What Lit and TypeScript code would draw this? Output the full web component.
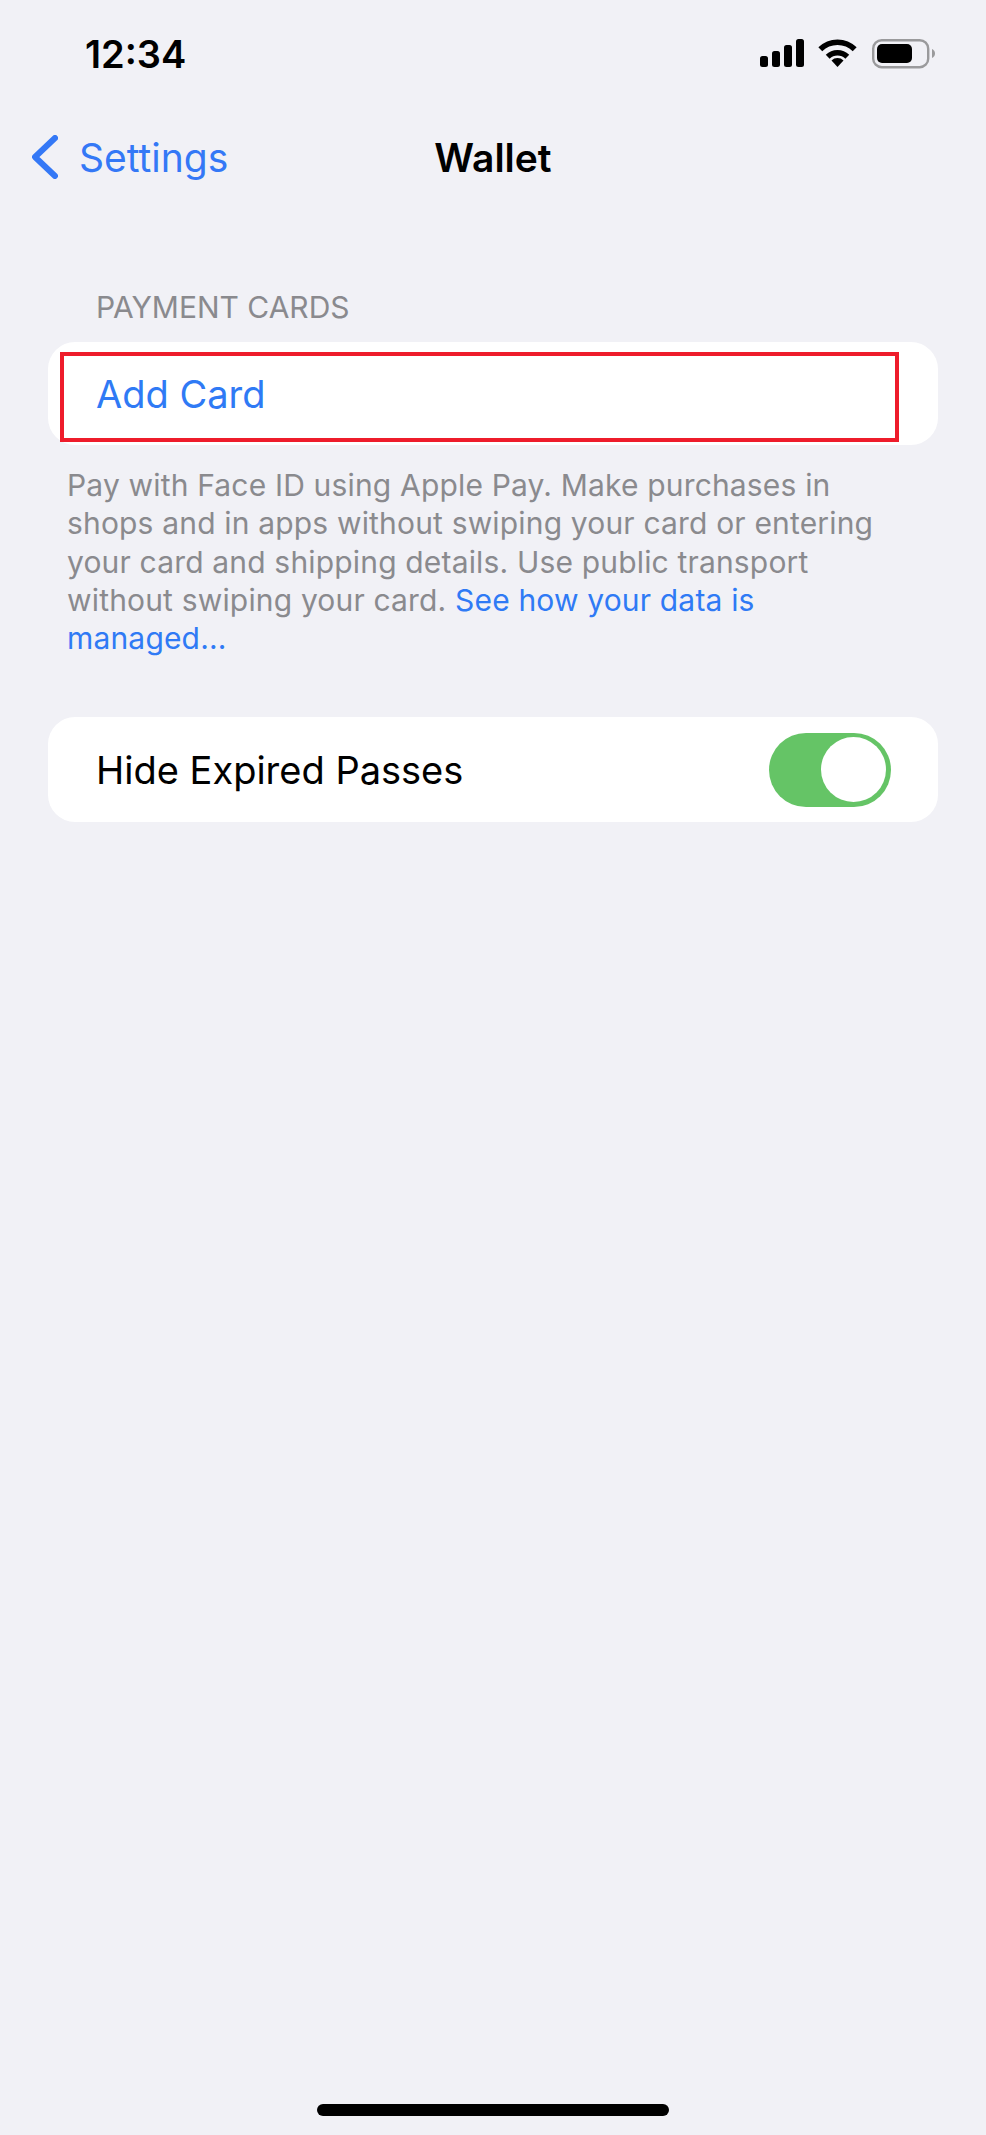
import { LitElement, html, css } from "lit";
import { customElement } from "lit/decorators.js";

@customElement("app-root")
export class AppRoot extends LitElement {
  static styles = css`
    :host {
      display: block;
      width: 986px;
      height: 2135px;
      background: #f1f1f6;
      font-family: Inter, "Noto Sans", sans-serif;
      color: #000;
      overflow: hidden;
    }
    .page { display: flex; flex-direction: column; height: 2135px; }
    .status {
      height: 108px;
      flex: none;
      display: flex;
      justify-content: space-between;
      align-items: flex-start;
      padding: 0 51px 0 85px;
      box-sizing: border-box;
    }
    .time {
      margin-top: 31px;
      font-size: 38px;
      line-height: 46px;
      font-weight: 600;
    }
    .status-icons { display: flex; align-items: flex-start; margin-top: 39px; gap: 14px; }
    .status-icons svg { display: block; }
    .nav {
      height: 98px;
      flex: none;
      display: grid;
      grid-template-columns: 1fr auto 1fr;
      align-items: center;
    }
    .back { display: flex; align-items: center; color: #3478f6; padding-left: 32px; gap: 21px; font-size: 39px; }
    .title { font-size: 39px; font-weight: 600; }
    .section-head {
      margin: 84px 0 18px;
      padding-left: 96px;
      font-size: 30px;
      line-height: 34px;
      color: #8a8a8e;
    }
    .card {
      position: relative;
      margin: 0 48px;
      height: 103px;
      background: #fff;
      border-radius: 27px;
      display: flex;
      align-items: center;
      justify-content: space-between;
      padding: 0 47px 0 48px;
      font-size: 38px;
      flex: none;
    }
    .card.toggle-row { height: 105px; }
    .add { color: #2f7af5; }
    .highlight {
      position: absolute;
      left: 12px;
      top: 10px;
      width: 839px;
      height: 90px;
      box-sizing: border-box;
      border: 4px solid #ee1c2b;
    }
    .foot {
      margin: 0 0 60px;
      padding: 21px 101px 0 67px;
      font-size: 30px;
      letter-spacing: 0.17px;
      line-height: 38.3px;
      color: #8a8a8e;
    }
    .foot a { color: #2f7af5; text-decoration: none; }
    .toggle {
      width: 122px;
      height: 74px;
      border-radius: 37px;
      background: #65c466;
      display: flex;
      justify-content: flex-end;
      align-items: center;
      padding: 0 5px;
      box-sizing: border-box;
    }
    .knob { width: 65px; height: 65px; border-radius: 50%; background: #fff; }
    .spacer { flex: 1; }
    .home-wrap { display: flex; justify-content: center; padding-bottom: 19px; }
    .home { width: 352px; height: 12px; border-radius: 6px; background: #000; }
  `;

  render() {
    return html`
      <div class="page">
        <div class="status">
          <div class="time">12:34</div>
          <div class="status-icons">
            <svg width="44" height="28" viewBox="0 0 44 28">
              <rect x="0" y="17" width="8" height="11" rx="2.500" />
              <rect x="12" y="12" width="8" height="16" rx="2.500" />
              <rect x="24" y="6" width="8" height="22" rx="2.500" />
              <rect x="36" y="0" width="8" height="28" rx="2.500" />
            </svg>
            <svg width="39" height="28" viewBox="0 0 39 28" fill="none" stroke="#000">
              <path d="M2.300 10.300A24.300 24.300 0 0 1 36.700 10.300" stroke-width="5.500" />
              <path d="M9.700 17.700A14 14 0 0 1 29.300 17.700" stroke-width="5.500" />
              <path d="M19.500 28L13.500 21.500A8.500 8.500 0 0 1 25.500 21.500Z" fill="#000" stroke="none" />
            </svg>
            <svg width="64" height="30" viewBox="0 0 64 30" fill="none">
              <rect x="2.200" y="1.200" width="55" height="27" rx="8.500" stroke="#9a9a9c" stroke-width="2.400" />
              <rect x="6" y="5" width="35" height="19" rx="5" fill="#000" />
              <path d="M61 10v9c1.800-.8 3-2.600 3-4.500s-1.200-3.700-3-4.500Z" fill="#9a9a9c" />
            </svg>
          </div>
        </div>
        <div class="nav">
          <div class="back">
            <svg width="26" height="44" viewBox="0 0 26 44" fill="none" stroke="#3478f6" stroke-width="6" stroke-linecap="round" stroke-linejoin="round">
              <path d="M23 3L3 22L23 41" />
            </svg>
            <span>Settings</span>
          </div>
          <div class="title">Wallet</div>
          <div></div>
        </div>
        <div class="section-head">PAYMENT CARDS</div>
        <div class="card">
          <span class="add">Add Card</span>
          <div class="highlight"></div>
        </div>
        <p class="foot">Pay with Face ID using Apple Pay. Make purchases in shops and in apps without swiping your card or entering your card and shipping details. Use public transport without swiping your card. <a>See how your data is managed...</a></p>
        <div class="card toggle-row">
          <span>Hide Expired Passes</span>
          <div class="toggle"><div class="knob"></div></div>
        </div>
        <div class="spacer"></div>
        <div class="home-wrap"><div class="home"></div></div>
      </div>
    `;
  }
}
